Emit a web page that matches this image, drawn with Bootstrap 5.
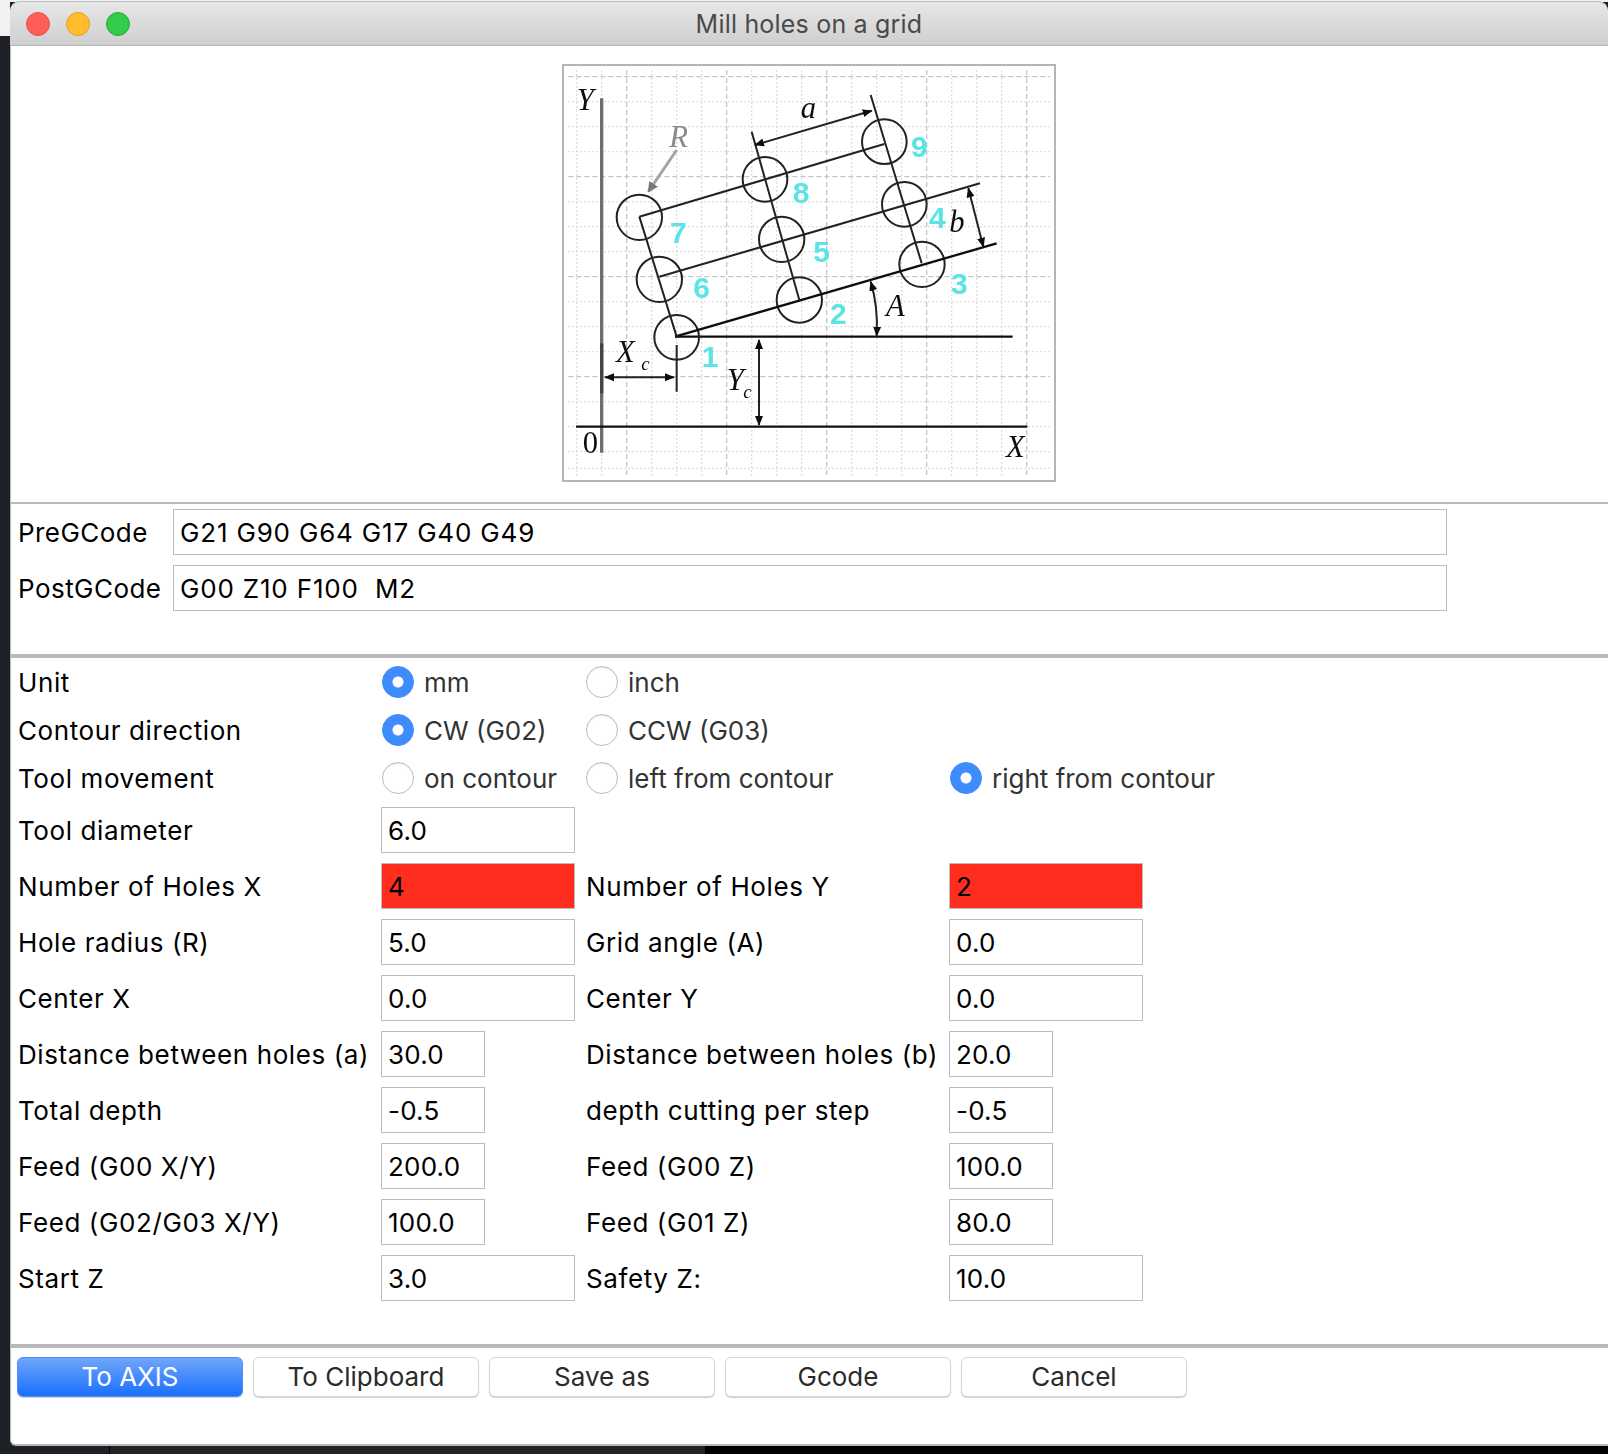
<!DOCTYPE html>
<html lang="en">
<head>
  <meta charset="UTF-8" />
  <title>Mill holes on a grid</title>
  <meta name="viewport" content="width=device-width, initial-scale=1" />
  <link href="https://cdn.jsdelivr.net/npm/bootstrap@5.3.0/dist/css/bootstrap.min.css" rel="stylesheet" />
  <style>
    html, body { height: 100%; }
    body {
      font-family: Inter, "Liberation Sans", sans-serif;
      font-size: 26px;
      color: #000;
      overflow: hidden;
      padding: 1px 0 0 10px;
      background:
        linear-gradient(#f1f1f1, #f1f1f1) 0 0 / 10px 36px no-repeat,
        linear-gradient(#f1f1f1, #f1f1f1) 0 0 / 100% 2px no-repeat,
        linear-gradient(#000, #000) 705px 1446px / 903px 8px no-repeat,
        linear-gradient(#000, #000) 109px 1446px / 1px 8px no-repeat,
        linear-gradient(#222, #222) 110px 1446px / 595px 8px no-repeat,
        #1d2125;
    }
    .app-window {
      height: 1445px;
      background: #fff;
      border-left: 1px solid #b9b9b9;
      border-bottom: 2px solid #b9b9b9;
      border-radius: 10px 10px 0 6px;
    }
    .title-bar {
      display: grid;
      grid-template-columns: 1fr auto 1fr;
      align-items: center;
      height: 45px;
      margin-left: -1px;
      background: linear-gradient(#e7e7e7, #cfcfcf);
      border-top: 1px solid #bdbdbd;
      border-bottom: 1px solid #b5b5b5;
      border-radius: 10px 10px 0 0;
    }
    .title-lights { padding-left: 16px; }
    .title-text { color: #4a4a4a; font-size: 25px; letter-spacing: .2px; padding-top: 3px; }
    .light { width: 24px; height: 24px; border-radius: 50%; border: 1px solid; }
    .light-red { background: #ff5f57; border-color: #e5504a; }
    .light-yellow { background: #ffbd2e; border-color: #e0a028; }
    .light-green { background: #33cc4a; border-color: #22ad38; }
    .diagram-wrap { padding: 18px 2px 20px 0; }
    .diagram { display: block; width: 494px; height: 418px; }
    .rule-thin { height: 2px; background: #b9b9b9; }
    .rule-thick { height: 4px; background: #b9b9b9; }
    .gcode-block { padding: 5px 0 33px 7px; }
    .gcode-row { height: 56px; display: flex; align-items: flex-start; }
    .gcode-label { width: 155px; height: 46px; line-height: 48px; letter-spacing: .45px; }
    .gcode-input { width: 1274px; }
    .value-input.form-control {
      height: 46px;
      padding: 0 6px;
      font-size: 26px;
      line-height: 1;
      letter-spacing: .2px;
      color: #000;
      border: 1px solid #bcbcbc;
      border-radius: 0;
      box-shadow: none;
      background-color: #fff;
    }
    .value-input.gcode-input.form-control { letter-spacing: .82px; }
    .value-input.is-flagged { background-color: #ff2d1e; }
    .value-wide { width: 194px; }
    .value-short { width: 104px; }
    .options-grid {
      display: grid;
      grid-template-columns: 363px 205px 363px 1fr;
      padding-left: 7px;
      margin-bottom: 38px;
    }
    .option-cell { height: 48px; display: flex; align-items: center; }
    .entry-cell { height: 56px; display: flex; align-items: center; }
    .field-name { letter-spacing: .6px; }
    .radio-text { color: #333; margin-left: 10px; }
    .radio-dot.form-check-input {
      width: 32px;
      height: 32px;
      margin: 0;
      flex: none;
      border: 1px solid #bdbdbd;
      box-shadow: inset 0 1px 1px rgba(0, 0, 0, .08);
      background-color: #fff;
    }
    .radio-dot.nudged.form-check-input { margin-left: 1px; }
    .radio-dot.form-check-input:checked {
      border-color: #3f8cff;
      background-color: #3f8cff;
      background-image: radial-gradient(circle, #fff 5px, transparent 6px);
      box-shadow: none;
    }
    .button-bar { padding: 9px 0 0 6px; gap: 10px; }
    .action-btn.btn {
      width: 226px;
      height: 40px;
      padding: 0;
      font-size: 26px;
      line-height: 38px;
      color: #2b2b2b;
      background: #fff;
      border: 1px solid #d6d6d6;
      border-radius: 6px;
      box-shadow: 0 1px 1px rgba(0, 0, 0, .18);
    }
    .action-btn.is-default {
      color: #fff;
      border-color: #4f8ef7;
      background: linear-gradient(#6fa6fa, #1a6ffe);
    }
    .dg-ital { font-family: "Liberation Serif", serif; font-style: italic; font-size: 92px; fill: #111; }
    .dg-sub { font-size: 56px; }
    .dg-num { font-family: "Liberation Sans", sans-serif; font-weight: 700; font-size: 90px; fill: #5be4e4; }
  </style>
</head>
<body>
  <div class="app-window d-flex flex-column">
    <div class="title-bar">
      <div class="title-lights d-flex gap-3">
        <span class="light light-red"></span>
        <span class="light light-yellow"></span>
        <span class="light light-green"></span>
      </div>
      <div class="title-text">Mill holes on a grid</div>
      <div></div>
    </div>

    <!-- Diagram, coordinates are 3x the picture -->
    <div class="diagram-wrap d-flex justify-content-center">
      <svg class="diagram" viewBox="36 42 1482 1254" xmlns="http://www.w3.org/2000/svg">
        <defs>
          <filter id="soft" x="-5%" y="-5%" width="110%" height="110%"><feGaussianBlur stdDeviation="2" /></filter>
          <marker id="tip" viewBox="0 0 10 10" refX="9" refY="5" markerWidth="5" markerHeight="5" orient="auto-start-reverse">
            <path d="M0 1L10 5L0 9z" fill="#111" />
          </marker>
          <marker id="tipGray" viewBox="0 0 10 10" refX="9" refY="5" markerWidth="3.5" markerHeight="3.5" orient="auto">
            <path d="M0 0L10 5L0 10z" fill="#777" />
          </marker>
        </defs>
        <rect x="39" y="45" width="1476" height="1248" fill="#fff" stroke="#b5b5b5" stroke-width="6" />
        <g filter="url(#soft)">
          <g fill="none" stroke="#c6c6c6" stroke-width="4">
            <path stroke-dasharray="15 9" d="M55 80H1500M55 380H1500M55 680H1500M55 980H1500M230 60V1280M530 60V1280M830 60V1280M1130 60V1280M1430 60V1280" />
            <path stroke="#d9d9d9" stroke-dasharray="5 7" d="M55 155H1500M55 230H1500M55 305H1500M55 455H1500M55 530H1500M55 605H1500M55 755H1500M55 830H1500M55 905H1500M55 1055H1500M55 1130H1500M55 1205H1500M55 1255H1500M80 60V1280M155 60V1280M305 60V1280M380 60V1280M455 60V1280M605 60V1280M680 60V1280M755 60V1280M905 60V1280M980 60V1280M1055 60V1280M1205 60V1280M1280 60V1280M1355 60V1280" />
          </g>

          <path d="M155 145V1208" stroke="#6e6e6e" stroke-width="10" fill="none" />
          <path d="M155 880V1030" stroke="#444" stroke-width="10" fill="none" />
          <path d="M78 1130H1432M375 860H1388" stroke="#111" stroke-width="7" fill="none" />

          <g fill="none" stroke="#222" stroke-width="6">
            <circle cx="380" cy="862" r="67" />
            <circle cx="748" cy="750" r="68" />
            <circle cx="1116" cy="643" r="68" />
            <circle cx="1063" cy="463" r="67" />
            <circle cx="695" cy="568" r="68" />
            <circle cx="328" cy="688" r="68" />
            <circle cx="268" cy="502" r="68" />
            <circle cx="645" cy="388" r="67" />
            <circle cx="1003" cy="275" r="67" />
            <path d="M375 860L1340 580" stroke="#111" stroke-width="7" />
            <path d="M328 680L1290 400M268 500L1003 282" />
            <path d="M268 500L380 860M605 245L748 750M962 135L1115 640M380 885V1025" />
            <path d="M165 982H372" marker-start="url(#tip)" marker-end="url(#tip)" />
            <path d="M627 870V1125" marker-start="url(#tip)" marker-end="url(#tip)" />
            <path d="M615 285L965 182" marker-start="url(#tip)" marker-end="url(#tip)" />
            <path d="M1255 415L1300 590" marker-start="url(#tip)" marker-end="url(#tip)" />
            <path d="M962 695Q985 770 980 857" marker-start="url(#tip)" marker-end="url(#tip)" />
            <path d="M380 300L295 425" stroke="#a5a5a5" stroke-width="9" marker-end="url(#tipGray)" />
          </g>

          <text class="dg-ital" x="80" y="180">Y</text>
          <text class="dg-ital" x="358" y="290" style="fill:#8a8a8a">R</text>
          <text class="dg-ital" x="752" y="203">a</text>
          <text class="dg-ital" x="198" y="935">X</text>
          <text class="dg-ital dg-sub" x="274" y="960">c</text>
          <text class="dg-ital" x="530" y="1020">Y</text>
          <text class="dg-ital dg-sub" x="580" y="1043">c</text>
          <text class="dg-ital" x="1008" y="797">A</text>
          <text class="dg-ital" x="1198" y="545">b</text>
          <text class="dg-ital" x="1368" y="1222">X</text>
          <text class="dg-ital" x="98" y="1208" style="font-style:normal">0</text>

          <text class="dg-num" x="455" y="950">1</text>
          <text class="dg-num" x="840" y="822">2</text>
          <text class="dg-num" x="1203" y="732">3</text>
          <text class="dg-num" x="1137" y="535">4</text>
          <text class="dg-num" x="790" y="635">5</text>
          <text class="dg-num" x="430" y="745">6</text>
          <text class="dg-num" x="360" y="580">7</text>
          <text class="dg-num" x="728" y="458">8</text>
          <text class="dg-num" x="1083" y="322">9</text>
        </g>
      </svg>
    </div>

    <div class="rule-thin"></div>

    <div class="gcode-block">
      <div class="gcode-row">
        <label class="gcode-label">PreGCode</label>
        <input class="form-control value-input gcode-input" type="text" value="G21 G90 G64 G17 G40 G49" />
      </div>
      <div class="gcode-row">
        <label class="gcode-label">PostGCode</label>
        <input class="form-control value-input gcode-input" type="text" value="G00 Z10 F100  M2" />
      </div>
    </div>

    <div class="rule-thick"></div>

    <div class="options-grid">
      <div class="option-cell field-name">Unit</div>
      <label class="option-cell"><input class="form-check-input radio-dot nudged" type="radio" name="unit" checked /><span class="radio-text">mm</span></label>
      <label class="option-cell"><input class="form-check-input radio-dot" type="radio" name="unit" /><span class="radio-text">inch</span></label>
      <div class="option-cell"></div>

      <div class="option-cell field-name">Contour direction</div>
      <label class="option-cell"><input class="form-check-input radio-dot nudged" type="radio" name="dir" checked /><span class="radio-text">CW (G02)</span></label>
      <label class="option-cell"><input class="form-check-input radio-dot" type="radio" name="dir" /><span class="radio-text">CCW (G03)</span></label>
      <div class="option-cell"></div>

      <div class="option-cell field-name">Tool movement</div>
      <label class="option-cell"><input class="form-check-input radio-dot nudged" type="radio" name="move" /><span class="radio-text">on contour</span></label>
      <label class="option-cell"><input class="form-check-input radio-dot" type="radio" name="move" /><span class="radio-text">left from contour</span></label>
      <label class="option-cell"><input class="form-check-input radio-dot nudged" type="radio" name="move" checked /><span class="radio-text">right from contour</span></label>

      <div class="entry-cell field-name">Tool diameter</div>
      <div class="entry-cell"><input class="form-control value-input value-wide" type="text" value="6.0" /></div>
      <div class="entry-cell"></div>
      <div class="entry-cell"></div>

      <div class="entry-cell field-name">Number of Holes X</div>
      <div class="entry-cell"><input class="form-control value-input is-flagged value-wide" type="text" value="4" /></div>
      <div class="entry-cell field-name">Number of Holes Y</div>
      <div class="entry-cell"><input class="form-control value-input is-flagged value-wide" type="text" value="2" /></div>

      <div class="entry-cell field-name">Hole radius (R)</div>
      <div class="entry-cell"><input class="form-control value-input value-wide" type="text" value="5.0" /></div>
      <div class="entry-cell field-name">Grid angle (A)</div>
      <div class="entry-cell"><input class="form-control value-input value-wide" type="text" value="0.0" /></div>

      <div class="entry-cell field-name">Center X</div>
      <div class="entry-cell"><input class="form-control value-input value-wide" type="text" value="0.0" /></div>
      <div class="entry-cell field-name">Center Y</div>
      <div class="entry-cell"><input class="form-control value-input value-wide" type="text" value="0.0" /></div>

      <div class="entry-cell field-name">Distance between holes (a)</div>
      <div class="entry-cell"><input class="form-control value-input value-short" type="text" value="30.0" /></div>
      <div class="entry-cell field-name">Distance between holes (b)</div>
      <div class="entry-cell"><input class="form-control value-input value-short" type="text" value="20.0" /></div>

      <div class="entry-cell field-name">Total depth</div>
      <div class="entry-cell"><input class="form-control value-input value-short" type="text" value="-0.5" /></div>
      <div class="entry-cell field-name">depth cutting per step</div>
      <div class="entry-cell"><input class="form-control value-input value-short" type="text" value="-0.5" /></div>

      <div class="entry-cell field-name">Feed (G00 X/Y)</div>
      <div class="entry-cell"><input class="form-control value-input value-short" type="text" value="200.0" /></div>
      <div class="entry-cell field-name">Feed (G00 Z)</div>
      <div class="entry-cell"><input class="form-control value-input value-short" type="text" value="100.0" /></div>

      <div class="entry-cell field-name">Feed (G02/G03 X/Y)</div>
      <div class="entry-cell"><input class="form-control value-input value-short" type="text" value="100.0" /></div>
      <div class="entry-cell field-name">Feed (G01 Z)</div>
      <div class="entry-cell"><input class="form-control value-input value-short" type="text" value="80.0" /></div>

      <div class="entry-cell field-name">Start Z</div>
      <div class="entry-cell"><input class="form-control value-input value-wide" type="text" value="3.0" /></div>
      <div class="entry-cell field-name">Safety Z:</div>
      <div class="entry-cell"><input class="form-control value-input value-wide" type="text" value="10.0" /></div>
    </div>

    <div class="rule-thick"></div>

    <div class="button-bar d-flex">
      <button class="btn action-btn is-default" type="button">To AXIS</button>
      <button class="btn action-btn" type="button">To Clipboard</button>
      <button class="btn action-btn" type="button">Save as</button>
      <button class="btn action-btn" type="button">Gcode</button>
      <button class="btn action-btn" type="button">Cancel</button>
    </div>
  </div>

  <script src="https://cdn.jsdelivr.net/npm/bootstrap@5.3.0/dist/js/bootstrap.bundle.min.js"></script>
</body>
</html>
